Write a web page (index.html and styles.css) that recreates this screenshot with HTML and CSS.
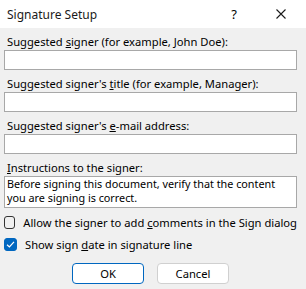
FILE: index.html
```html
<!DOCTYPE html>
<html lang="en">
<head>
    <meta charset="UTF-8">
    <meta name="viewport" content="width=device-width, initial-scale=1.0">
    <title>Signature Setup</title>
    <link rel="stylesheet" href="styles.css">
</head>
<body>
    <div class="dialog">
        <div class="titlebar">
            <div class="title">Signature Setup</div>
            <div class="title-btn help">?</div>
            <div class="title-btn close">
                <svg width="10" height="10" viewBox="0 0 10 10">
                    <path d="M0.5 0.5 L9.5 9.5 M9.5 0.5 L0.5 9.5" stroke="#1a1a1a" stroke-width="1.1" fill="none"/>
                </svg>
            </div>
        </div>
        <div class="content">
            <div class="field">
                <label class="label">Suggested <u>s</u>igner (for example, John Doe):</label>
                <div class="input"></div>
            </div>
            <div class="field">
                <label class="label">Suggested signer's <u>t</u>itle (for example, Manager):</label>
                <div class="input"></div>
            </div>
            <div class="field">
                <label class="label">Suggested signer's <u>e</u>-mail address:</label>
                <div class="input"></div>
            </div>
            <div class="field">
                <label class="label"><u>I</u>nstructions to the signer:</label>
                <div class="input textarea">Before signing this document, verify that the content you are signing is correct.</div>
            </div>
            <div class="check-row first">
                <div class="checkbox"></div>
                <span>Allow the signer to add <u>c</u>omments in the Sign dialog</span>
            </div>
            <div class="check-row">
                <div class="checkbox checked">
                    <svg width="9" height="9" viewBox="0 0 9 9">
                        <path d="M1 4.8 L3.4 7 L8 1.8" stroke="#fff" stroke-width="1.2" fill="none"/>
                    </svg>
                </div>
                <span>Show sign <u>d</u>ate in signature line</span>
            </div>
            <div class="buttons">
                <div class="button default">OK</div>
                <div class="button">Cancel</div>
            </div>
        </div>
    </div>
</body>
</html>
```

FILE: styles.css
```css
body {
    margin: 0;
    font-family: "Noto Sans", "Open Sans", sans-serif;
    font-size: 11.2px;
    color: #000;
    background-color: #f0f0f0;
}
.dialog {
    width: 306px;
    height: 289px;
    background-color: #f0f0f0;
}
.titlebar {
    height: 28px;
    background-color: #fff;
    display: flex;
    align-items: center;
}
.title {
    flex: 1;
    padding-left: 7px;
    font-size: 12px;
    color: #1a1a1a;
}
.title-btn {
    display: flex;
    justify-content: center;
    align-items: center;
    font-size: 13px;
}
.help {
    width: 20px;
    margin-right: 32px;
}
.close {
    width: 10px;
    margin-right: 20px;
}
.content {
    padding: 5px 9px 0 4px;
}
.field {
    display: flex;
    flex-direction: column;
    margin-bottom: 5px;
}
.label {
    padding-left: 3px;
    line-height: 17px;
    white-space: nowrap;
}
.input {
    height: 18px;
    background-color: #fff;
    border: 1px solid #a8a8a8;
}
.textarea {
    height: 30px;
    padding: 0 2px;
    line-height: 14px;
    font-size: 10.8px;
    color: #000;
}
.check-row {
    display: flex;
    align-items: center;
    height: 22px;
    white-space: nowrap;
}
.check-row.first {
    margin-top: -2px;
}
.checkbox {
    width: 11px;
    height: 11px;
    border: 1px solid #333;
    border-radius: 3px;
    margin-right: 8px;
    display: flex;
    justify-content: center;
    align-items: center;
}
.checkbox.checked {
    background-color: #0067c0;
    border-color: #0067c0;
}
.buttons {
    display: flex;
    justify-content: center;
    gap: 13px;
    margin-top: 8px;
}
.button {
    width: 70px;
    height: 19px;
    line-height: 19px;
    text-align: center;
    background-color: #fff;
    border: 1px solid #d0d0d0;
    border-radius: 4px;
}
.button.default {
    border-color: #0067c0;
}
```
